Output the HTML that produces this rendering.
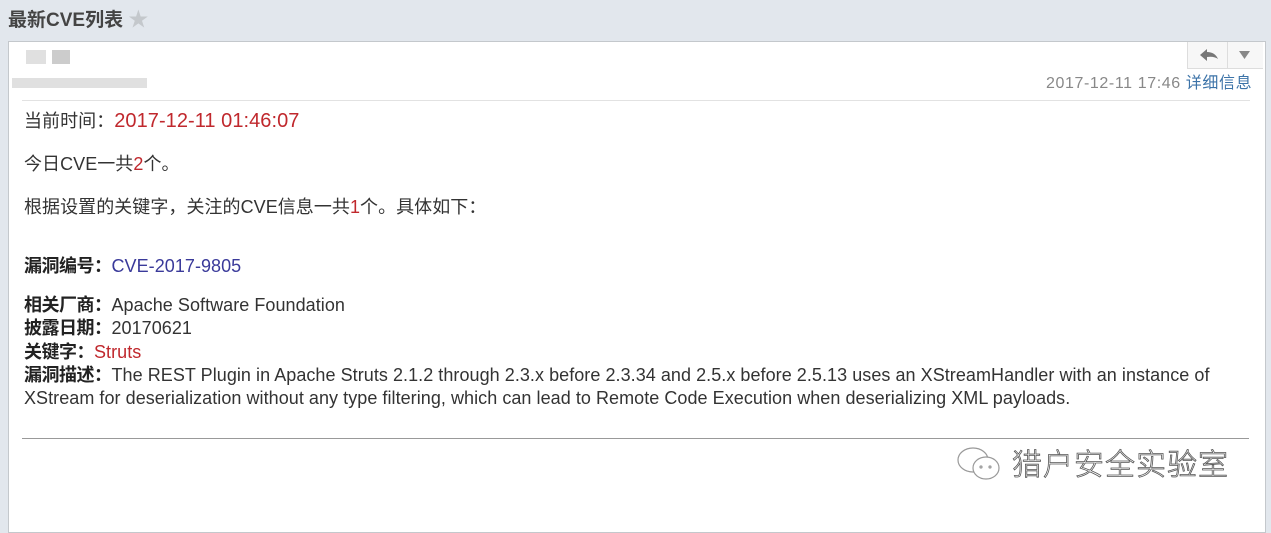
<!DOCTYPE html>
<html><head><meta charset="utf-8"><style>
body{margin:0;width:1271px;height:520px;background:#e2e7ed;position:relative;overflow:hidden;font-family:"Liberation Sans","Noto Sans CJK SC",sans-serif;color:#333}
.t{position:absolute;white-space:nowrap;line-height:1}
.box{position:absolute;left:8px;top:41px;width:1256px;height:490px;background:#fff;border:1px solid #c4c8cc}
.b{font-weight:bold;color:#222;letter-spacing:-0.5px}
.r{color:#c0282d}
.bl{color:#3a3a9a}
.m{font-size:18px;letter-spacing:0.05px}
</style></head><body>
<div class="t" style="left:8px;top:10px;font-size:19px;color:#444;font-weight:bold">最新CVE列表 <span style="color:#c4c8cc;font-size:20px">★</span></div>
<div class="box"></div>
<div style="position:absolute;left:26px;top:50px;width:20px;height:14px;background:#ccc;opacity:.6"></div>
<div style="position:absolute;left:52px;top:50px;width:18px;height:14px;background:#aaa;opacity:.6"></div>
<div style="position:absolute;left:12px;top:78px;width:135px;height:10px;background:#ccc;opacity:.6"></div>
<div style="position:absolute;left:1187px;top:42px;width:75px;height:26px;border-left:1px solid #ddd;border-bottom:1px solid #ddd;background:#f7f7f7"></div>
<div style="position:absolute;left:1227px;top:42px;width:1px;height:26px;background:#ddd"></div>
<svg style="position:absolute;left:1198px;top:47px" width="22" height="16"><path d="M2 8 L9 2 L9 5 Q17 5 20 12 Q16 9 9 10 L9 14 Z" fill="#777"/></svg>
<svg style="position:absolute;left:1239px;top:50px" width="12" height="10"><path d="M0 1 L11 1 L5.5 9 Z" fill="#888"/></svg>
<div class="t" style="left:1046px;top:76px;font-size:16px;color:#888;letter-spacing:0.6px">2017-12-11 17:46 <span style="color:#3c73a8">详细信息</span></div>
<div style="position:absolute;left:22px;top:100px;width:1228px;height:1px;background:#e2e2e2"></div>
<div class="t m" style="left:24px;top:111px">当前时间：<span class="r" style="font-size:20px">2017-12-11 01:46:07</span></div>
<div class="t m" style="left:24px;top:155px">今日CVE一共<span class="r">2</span>个。</div>
<div class="t m" style="left:24px;top:198px">根据设置的关键字，关注的CVE信息一共<span class="r">1</span>个。具体如下：</div>
<div class="t m" style="left:24px;top:257px"><span class="b">漏洞编号：</span><span class="bl">CVE-2017-9805</span></div>
<div class="t m" style="left:24px;top:296px"><span class="b">相关厂商：</span>Apache Software Foundation</div>
<div class="t m" style="left:24px;top:319px"><span class="b">披露日期：</span>20170621</div>
<div class="t m" style="left:24px;top:343px"><span class="b">关键字：</span><span class="r">Struts</span></div>
<div class="t m" style="left:24px;top:366px"><span class="b">漏洞描述：</span>The REST Plugin in Apache Struts 2.1.2 through 2.3.x before 2.3.34 and 2.5.x before 2.5.13 uses an XStreamHandler with an instance of</div>
<div class="t m" style="left:24px;top:389px">XStream for deserialization without any type filtering, which can lead to Remote Code Execution when deserializing XML payloads.</div>
<div style="position:absolute;left:22px;top:438px;width:1227px;height:1px;background:#999"></div>
<svg style="position:absolute;left:955px;top:446px" width="50" height="38"><g fill="none" stroke="#999" stroke-width="1.2"><ellipse cx="18" cy="14" rx="15" ry="12"/><ellipse cx="31" cy="22" rx="13" ry="11" fill="#fff"/><circle cx="26" cy="21" r="1"/><circle cx="35" cy="21" r="1"/></g></svg>
<div class="t" style="left:1012px;top:447px;font-size:30px;color:#fff;-webkit-text-stroke:0.8px #555;font-family:'Noto Sans CJK SC',sans-serif;font-weight:300;letter-spacing:1px">猎户安全实验室</div>
</body></html>
